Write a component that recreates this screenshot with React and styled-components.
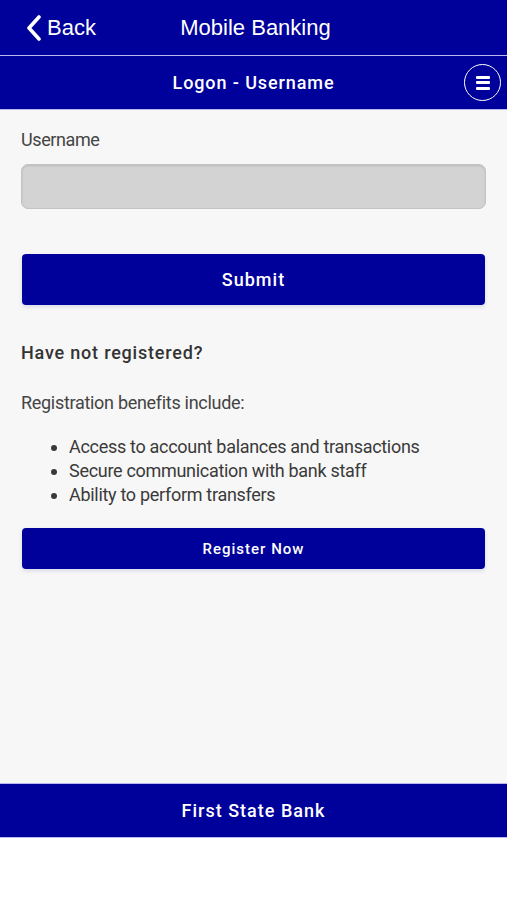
import React from 'react'
import styled, { createGlobalStyle } from 'styled-components'

const Global = createGlobalStyle`
  html, body {
    margin: 0;
    padding: 0;
    background: #ffffff;
  }
  * { box-sizing: border-box; }
`

const Page = styled.div`
  width: 507px;
  display: flex;
  flex-direction: column;
  font-family: Roboto, "Liberation Sans", sans-serif;
`

const NavBar = styled.header`
  height: 56px;
  background: #00009b;
  display: grid;
  grid-template-columns: 1fr auto 1fr;
  align-items: center;
  color: #ffffff;
  font-family: "Liberation Sans", Arial, sans-serif;
  font-size: 22px;
  border-bottom: 1px solid #b8b8ee;
`

const BackLink = styled.div`
  display: flex;
  align-items: center;
  gap: 5px;
  padding-left: 26px;
`

const NavTitle = styled.div`
  padding-left: 4px;
`

const SubBar = styled.div`
  height: 54px;
  background: #00009b;
  display: flex;
  align-items: center;
  justify-content: center;
  position: relative;
  color: #ffffff;
  font-size: 18px;
  font-weight: 500;
  letter-spacing: 0.9px;
  border-bottom: 1px solid #b8b8ee;
`

const MenuButton = styled.div`
  position: absolute;
  right: 6px;
  top: 8px;
  width: 37px;
  height: 37px;
  border: 1.5px solid #ffffff;
  border-radius: 50%;
  display: flex;
  flex-direction: column;
  align-items: center;
  justify-content: center;
  gap: 2.5px;
`

const MenuLine = styled.span`
  width: 14px;
  height: 3px;
  border-radius: 1px;
  background: #ffffff;
`

const Body = styled.main`
  background: #f7f7f7;
  height: 673px;
  padding: 19px 21px 0 21px;
  color: #444444;
`

const Label = styled.div`
  font-size: 18px;
  line-height: 22px;
  letter-spacing: -0.4px;
`

const Input = styled.div`
  margin-top: 13px;
  height: 45px;
  background: #d3d3d3;
  border: 1.5px solid #c3c3c3;
  border-radius: 7px;
  box-shadow: inset 0 1px 2px rgba(0, 0, 0, 0.12);
`

const Button = styled.div`
  margin: ${p => p.$top}px 1px 0 1px;
  height: ${p => p.$height}px;
  background: #00009b;
  border-radius: 4px;
  display: flex;
  align-items: center;
  justify-content: center;
  color: #ffffff;
  font-size: ${p => p.$size}px;
  font-weight: 500;
  letter-spacing: 1px;
  box-shadow: 0 2px 4px rgba(0, 0, 160, 0.12);
`

const Heading = styled.div`
  margin-top: 37px;
  font-size: 18px;
  font-weight: 500;
  letter-spacing: 0.8px;
  color: #333333;
`

const Para = styled.div`
  margin-top: 29px;
  font-size: 18px;
  letter-spacing: -0.3px;
`

const List = styled.ul`
  margin: 22px 0 0 0;
  padding-left: 48px;
  font-size: 18px;
  line-height: 24px;
  letter-spacing: -0.3px;
  color: #3a3a3a;
`

const Footer = styled.footer`
  height: 55px;
  background: #00009b;
  border-top: 1px solid #b8b8ee;
  border-bottom: 1px solid #b8b8ee;
  display: flex;
  align-items: center;
  justify-content: center;
  color: #ffffff;
  font-size: 18px;
  font-weight: 500;
  letter-spacing: 1px;
`

const App = () => {
  return (
    <Page>
      <Global />
      <NavBar>
        <BackLink>
          <svg width="16" height="26" viewBox="0 0 16 26">
            <path d="M13 2 L3 13 L13 24" fill="none" stroke="#ffffff" strokeWidth="3.6" strokeLinecap="round" strokeLinejoin="round" />
          </svg>
          <span>Back</span>
        </BackLink>
        <NavTitle>Mobile Banking</NavTitle>
        <div />
      </NavBar>
      <SubBar>
        Logon - Username
        <MenuButton>
          <MenuLine />
          <MenuLine />
          <MenuLine />
        </MenuButton>
      </SubBar>
      <Body>
        <Label>Username</Label>
        <Input />
        <Button $top={45} $height={51} $size={18}>Submit</Button>
        <Heading>Have not registered?</Heading>
        <Para>Registration benefits include:</Para>
        <List>
          <li>Access to account balances and transactions</li>
          <li>Secure communication with bank staff</li>
          <li>Ability to perform transfers</li>
        </List>
        <Button $top={21} $height={41} $size={15}>Register Now</Button>
      </Body>
      <Footer>First State Bank</Footer>
    </Page>
  )
}

export default App
